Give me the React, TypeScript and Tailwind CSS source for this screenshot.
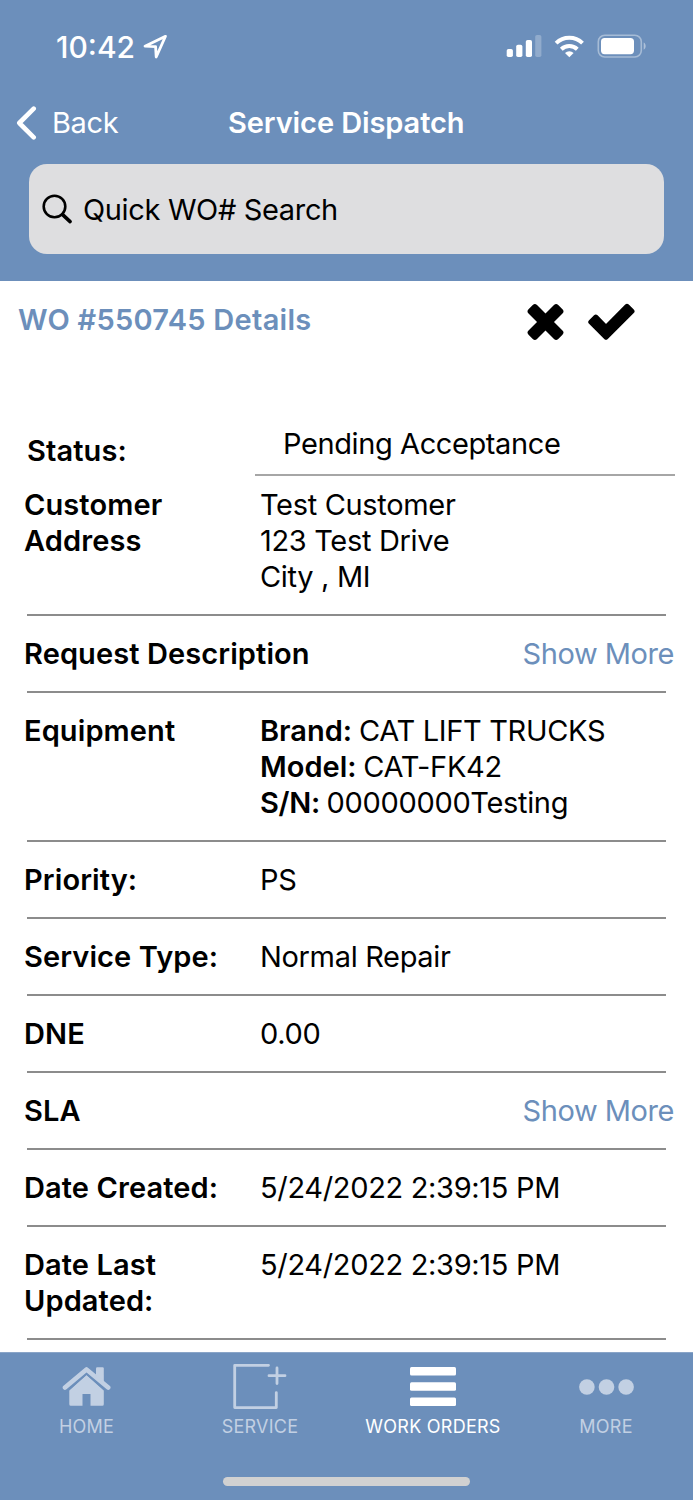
import React from 'react';
import { clsx } from 'clsx';

type Tab = { label: string; icon: React.ReactNode; active?: boolean; width: string };

const tabs: Tab[] = [
  { label: 'HOME', icon: <HomeIcon />, width: 'w-[173px]' },
  { label: 'SERVICE', icon: <ServiceIcon />, width: 'w-[174px]' },
  { label: 'WORK ORDERS', icon: <OrdersIcon />, active: true, width: 'w-[172px]' },
  { label: 'MORE', icon: <MoreIcon />, width: 'w-[174px]' },
];

export default function App() {
  return (
    <div className="w-[693px] h-[1500px] flex flex-col overflow-hidden bg-white text-black text-[29px] leading-[36px] font-['Inter',sans-serif]">
      {/* Header */}
      <header className="h-[281px] shrink-0 bg-[#6c8fbb] text-white">
        <div className="h-[94px] pl-[56px] pr-[47px] flex items-center justify-between">
          <div className="flex items-center gap-[8px] pb-[1px]">
            <span className="text-[30px] font-medium tracking-[0px]">10:42</span>
            <LocationIcon />
          </div>
          <StatusIcons />
        </div>
        <div className="h-[58px] pl-[16px] pr-[16px] grid grid-cols-[212px_1fr_212px] items-center">
          <button className="flex items-center gap-[15px]">
            <svg width="21" height="34" viewBox="0 0 21 34" fill="none" stroke="currentColor" strokeWidth="4.6" strokeLinecap="round" strokeLinejoin="round">
              <path d="M17.7 2.7 3.3 17l14.4 14.3" />
            </svg>
            <span className="tracking-[-0.4px]">Back</span>
          </button>
          <h1 className="font-semibold whitespace-nowrap tracking-[-0.1px]">Service Dispatch</h1>
        </div>
        <div className="mt-[12px] ml-[29px] w-[635px] h-[90px] pl-[13px] rounded-[18px] bg-[#dedee0] text-black flex items-center gap-[10px]">
          <svg width="31" height="31" viewBox="0 0 31 31" fill="none" stroke="currentColor" strokeLinecap="round">
            <circle cx="12.500" cy="12.500" r="10.800" strokeWidth="2.6" />
            <path d="m20.600 20.600 7.500 7" strokeWidth="3.6" />
          </svg>
          <span className="pt-[1px] tracking-[-0.35px]">Quick WO# Search</span>
        </div>
      </header>

      {/* Work order details */}
      <main className="h-[1071px] shrink-0 overflow-hidden">
        <div className="h-[76px] pl-[18px] pr-[58px] flex items-center justify-between">
          <h2 className="pt-[1px] font-semibold text-[#6c8fbb] tracking-[0.28px]">WO #550745 Details</h2>
          <div className="flex items-center gap-[24px] pt-[6px]">
            <svg width="37" height="38" viewBox="-18.5 -19 37 38">
              <rect x="-21" y="-6" width="42" height="12" rx="3" transform="rotate(45)" />
              <rect x="-21" y="-6" width="42" height="12" rx="3" transform="rotate(-45)" />
            </svg>
            <svg width="47" height="38" viewBox="588.5 303 47 38" stroke="currentColor" strokeWidth="5" strokeLinejoin="round">
              <path d="m606.5 337.2-15.2-15.1 5-5 10.2 10.3 21-21.1 5 5z" />
            </svg>
          </div>
        </div>

        <div className="mt-[68px] pl-[27px] flex">
          <div className="w-[228px] pt-[8px] font-semibold tracking-[0.1px]">Status:</div>
          <div className="w-[420px] h-[51px] pt-[1px] pl-[28px] border-b-2 border-[#a6a6a6] tracking-[-0.4px]">Pending Acceptance</div>
        </div>

        <Row label={<>Customer<br />Address</>} height="h-[138px] pt-[11px]">
          Test Customer<br />123 Test Drive<br />City , MI
        </Row>
        <Row label="Request Description" height="h-[75px]" more />
        <Row label="Equipment" height="h-[147px]">
          <b className="font-semibold tracking-[0px] -mr-[1px]">Brand:</b> CAT LIFT TRUCKS<br />
          <b className="font-semibold tracking-[0px] -mr-[1px]">Model:</b> CAT-FK42<br />
          <b className="font-semibold -mr-[1px]">S/N:</b> 00000000Testing
        </Row>
        <Row label="Priority:" height="h-[75px]">PS</Row>
        <Row label="Service Type:" height="h-[75px]">Normal Repair</Row>
        <Row label="DNE" height="h-[75px]">0.00</Row>
        <Row label="SLA" height="h-[75px]" more />
        <Row label="Date Created:" height="h-[75px]">5/24/2022 2:39:15 PM</Row>
        <Row label={<>Date Last<br />Updated:</>} height="h-[111px]">5/24/2022 2:39:15 PM</Row>
      </main>

      {/* Tab bar */}
      <nav className="h-[148px] shrink-0 bg-[#6c8fbb] border-t border-[#8aa5c8] flex flex-col items-center">
        <div className="h-[124px] w-full flex">
          {tabs.map((tab) => (
            <button
              key={tab.label}
              className={clsx(
                'flex flex-col items-center',
                tab.width,
                tab.active ? 'text-white' : 'text-[#c2d0e3]'
              )}
            >
              <span className="h-[61px] mt-[3px] flex items-center">{tab.icon}</span>
              <span className="text-[18px] leading-[20px] tracking-[0.25px]">{tab.label}</span>
            </button>
          ))}
        </div>
        <div className="w-[247px] h-[9px] rounded-full bg-[#d1d1d1]" />
      </nav>
    </div>
  );
}

function Row({ label, height, more, children }: { label: React.ReactNode; height: string; more?: boolean; children?: React.ReactNode }) {
  return (
    <>
      <div className={clsx('pl-[24px] pr-[19px] flex', height, !height.includes('pt-') && 'pt-[20px]')}>
        <div className={clsx('font-semibold whitespace-nowrap tracking-[0.1px]', more ? 'flex-1' : 'w-[236px]')}>{label}</div>
        {more ? (
          <a className="text-[#6c8fbb] tracking-[-0.45px]">Show More</a>
        ) : (
          <div className="flex-1 tracking-[-0.33px]">{children}</div>
        )}
      </div>
      <div className="h-[2px] ml-[27px] mr-[27px] bg-[#8c8c8c]" />
    </>
  );
}

function LocationIcon() {
  return (
    <svg width="25" height="25" viewBox="0 0 25 25" fill="none" stroke="currentColor" strokeWidth="2.8" strokeLinejoin="round">
      <path d="M22.5 2.3 2 12.2l10.6.5.6 10.3z" />
    </svg>
  );
}

function StatusIcons() {
  return (
    <svg width="140" height="26" viewBox="506 34 140 26" fill="#fff">
      <rect x="506.7" y="49" width="6.2" height="8" rx="1.8" />
      <rect x="516.2" y="44.7" width="6.2" height="12.3" rx="1.8" />
      <rect x="525.8" y="40" width="6.2" height="17" rx="1.8" />
      <rect x="535.2" y="35" width="6.2" height="22" rx="1.8" opacity=".25" />
      <path d="M569.3 57.2 565 53a6.5 6.5 0 0 1 8.6 0z" />
      <g fill="none" stroke="#fff" strokeWidth="4">
        <path d="M561.3 49.2a11.6 11.6 0 0 1 16 0" />
        <path d="M556.1 43.1a19 19 0 0 1 26.4 0" />
      </g>
      <rect x="598.3" y="35.2" width="43" height="21.8" rx="6.5" fill="none" stroke="#fff" strokeWidth="1.6" opacity=".4" />
      <rect x="601" y="38" width="33" height="16.2" rx="3.6" />
      <path d="M643.7 42.5c2.6 1 2.6 6.200 0 7.300z" opacity=".45" />
    </svg>
  );
}

function HomeIcon() {
  return (
    <svg width="50" height="41" viewBox="62 1366 50 41" fill="currentColor">
      <path d="M69.300 1390.500 86.500 1375l17.300 15.500v13.800q0 1.500-1.500 1.500H90.500V1394h-8v11.800H70.800q-1.500 0-1.500-1.500z" />
      <path d="M96 1375v-6.500q0-1.200 1.200-1.200h5.400q1.200 0 1.200 1.200v14.300z" />
      <path d="m65 1387.600 21.500-18.200 21.700 18.200" fill="none" stroke="currentColor" strokeWidth="4.600" strokeLinecap="round" strokeLinejoin="round" />
      <path d="m65.500 1392.500 21-18.400 21 18.400" fill="none" stroke="#6c8fbb" strokeWidth="1.300" />
    </svg>
  );
}

function ServiceIcon() {
  return (
    <svg width="54" height="48" viewBox="233 1363 54 48" fill="none" stroke="currentColor" strokeWidth="2.800" strokeLinecap="round" strokeLinejoin="round">
      <path d="M268.500 1365.300h-33.800v42.300h41.600v-15" />
      <path d="M277 1368v15.500M269 1375.700h16" />
    </svg>
  );
}

function OrdersIcon() {
  return (
    <svg width="46" height="39" viewBox="0 0 46 39" fill="currentColor">
      <rect width="46" height="8.400" rx="1.500" />
      <rect y="15.300" width="46" height="8.400" rx="1.500" />
      <rect y="30.600" width="46" height="8.400" rx="1.500" />
    </svg>
  );
}

function MoreIcon() {
  return (
    <svg width="55" height="16" viewBox="0 0 55 16" fill="currentColor">
      <circle cx="7.900" cy="8" r="7.800" />
      <circle cx="27.500" cy="8" r="7.800" />
      <circle cx="47.100" cy="8" r="7.800" />
    </svg>
  );
}
